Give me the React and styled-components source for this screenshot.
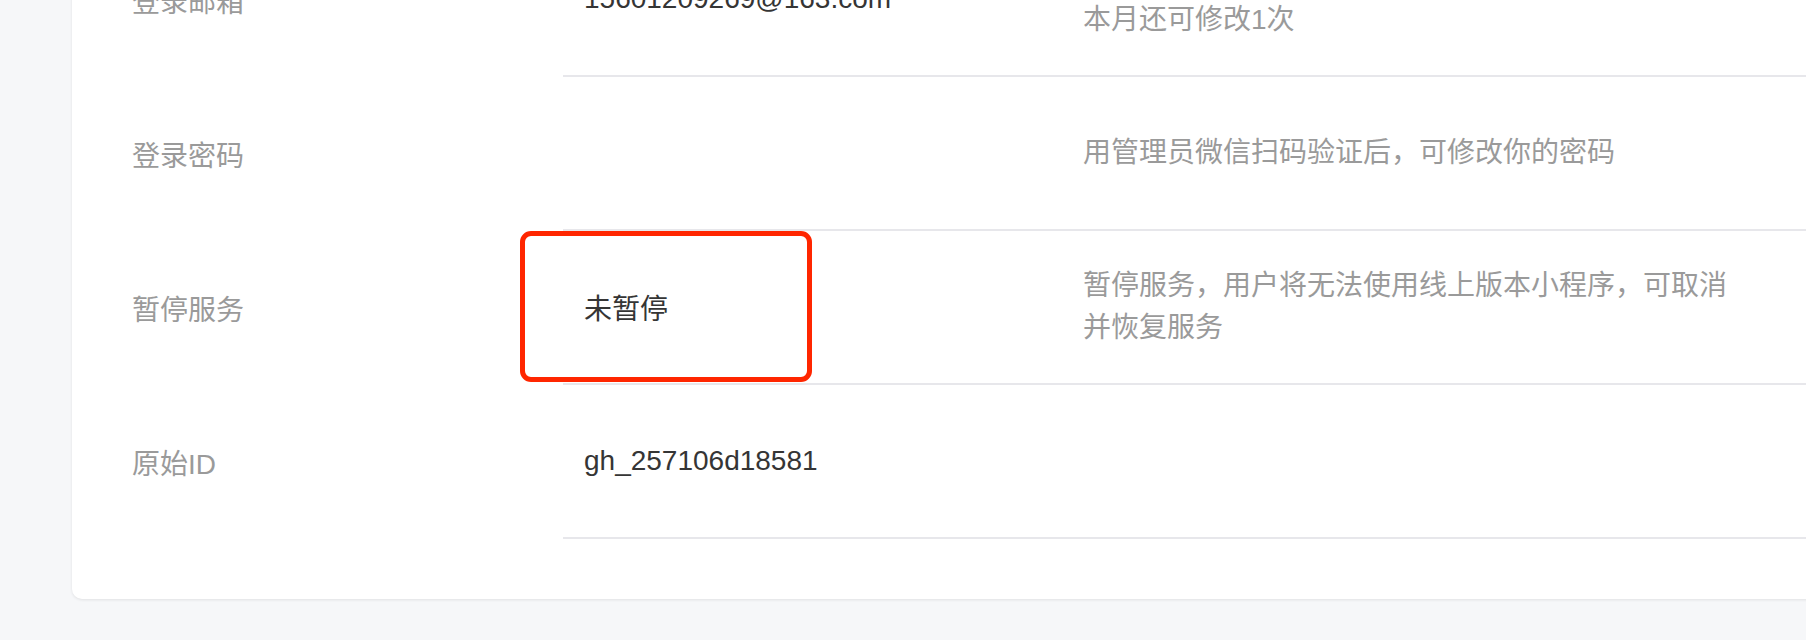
import React from 'react'
import styled, { createGlobalStyle } from 'styled-components'

const GlobalStyle = createGlobalStyle`
    html, body {
        margin: 0;
        padding: 0;
        background-color: #f6f7f9;
        font-family: "Liberation Sans", "Noto Sans CJK SC", sans-serif;
    }
`

const Page = styled.div`
    height: 640px;
    overflow: hidden;
    background-color: #f6f7f9;
    padding-left: 72px;
`

const Card = styled.div`
    margin-top: -77px;
    margin-right: -60px;
    padding-bottom: 60px;
    background-color: #fff;
    border-radius: 10px;
    box-shadow: 0 1px 3px rgba(0, 0, 0, 0.09);
`

const Row = styled.div`
    display: grid;
    grid-template-columns: 491px 1fr;
    height: 154px;
`

const Label = styled.div`
    display: flex;
    align-items: center;
    padding-left: 60px;
    font-size: 28px;
    color: #9a9a9a;
`

const Content = styled.div`
    display: flex;
    align-items: center;
    border-bottom: 2px solid #e7e7eb;
`

const Value = styled.div`
    position: relative;
    flex: 0 0 520px;
    align-self: stretch;
    display: flex;
    align-items: center;
    box-sizing: border-box;
    padding-left: 21px;
    font-size: 28px;
    color: #353535;
`

const Desc = styled.div`
    width: 660px;
    font-size: 28px;
    line-height: 42px;
    color: #9a9a9a;
`

const Highlight = styled.div`
    position: absolute;
    left: -43px;
    top: 0;
    width: 292px;
    height: 151px;
    box-sizing: border-box;
    border: 5px solid #ff2600;
    border-radius: 11px;
`

const rows = [
  {
    label: '登录邮箱',
    value: '15601209269@163.com',
    desc: ['一个月内可申请修改1次', '本月还可修改1次'],
  },
  {
    label: '登录密码',
    value: '',
    desc: ['用管理员微信扫码验证后，可修改你的密码'],
  },
  {
    label: '暂停服务',
    value: '未暂停',
    desc: ['暂停服务，用户将无法使用线上版本小程序，可取消并恢复服务'],
    marked: true,
  },
  {
    label: '原始ID',
    value: 'gh_257106d18581',
    desc: [],
  },
]

export default function App() {
  return (
    <Page>
      <GlobalStyle />
      <Card>
        {rows.map((row) => (
          <Row key={row.label}>
            <Label>{row.label}</Label>
            <Content>
              <Value>
                {row.value}
                {row.marked && <Highlight />}
              </Value>
              <Desc>
                {row.desc.map((line) => (
                  <div key={line}>{line}</div>
                ))}
              </Desc>
            </Content>
          </Row>
        ))}
      </Card>
    </Page>
  )
}
